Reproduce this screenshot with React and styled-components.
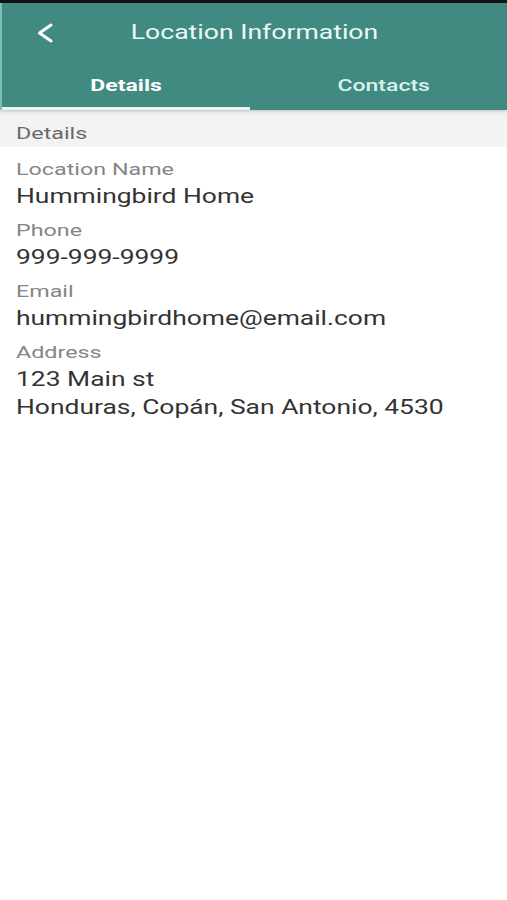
import React from "react";
import styled, { createGlobalStyle } from "styled-components";

const Global = createGlobalStyle`
  html, body { margin: 0; padding: 0; background: #ffffff; }
  body { font-family: Roboto, "Noto Sans", Arial, sans-serif; -webkit-font-smoothing: antialiased; }
  * { box-sizing: border-box; }
`;

/* The reference is rendered horizontally wide: every run of text is stretched by this factor */
const STRETCH = 1.37;

const Screen = styled.div`
  width: 507px;
  min-height: 900px;
  background: #fff;
  display: flex;
  flex-direction: column;
  overflow: hidden;
`;

const StatusStrip = styled.div`
  height: 3px;
  background: #121212;
`;

const Header = styled.header`
  background: #418a82;
  border-left: 2px solid #7fbdb3;
  display: flex;
  flex-direction: column;
  box-shadow: 0 2px 3px rgba(0, 0, 0, 0.22);
  position: relative;
  z-index: 1;
`;

const TitleRow = styled.div`
  height: 58px;
  display: flex;
  align-items: center;
  position: relative;
`;

const BackButton = styled.button`
  position: absolute;
  left: 35px;
  top: 20px;
  width: 16px;
  height: 20px;
  padding: 0;
  border: 0;
  background: transparent;
  display: block;
`;

const Title = styled.h1`
  margin: 0;
  flex: 1;
  text-align: center;
  color: #eef8f5;
  font-size: 19.4px;
  font-weight: 400;
  transform: scaleX(${STRETCH});
  transform-origin: 50% 50%;
`;

const Tabs = styled.nav`
  height: 49px;
  display: grid;
  grid-template-columns: 248px 1fr;
`;

const Tab = styled.div`
  display: flex;
  align-items: center;
  justify-content: center;
  padding-top: 2px;
  padding-left: ${(p) => (p.$active ? "0" : "10px")};
  border-bottom: 3px solid ${(p) => (p.$active ? "#e6f6f2" : "transparent")};
`;

const TabLabel = styled.span`
  display: inline-block;
  font-size: 16.8px;
  font-weight: ${(p) => (p.$active ? 700 : 500)};
  color: ${(p) => (p.$active ? "#ffffff" : "#d8f3ec")};
  transform: scaleX(${STRETCH});
`;

const SectionHeader = styled.div`
  margin-top: 3px;
  height: 34px;
  background: #f3f3f3;
  padding: 6px 0 0 16px;
  display: flex;
  align-items: center;
`;

const SectionTitle = styled.span`
  display: inline-block;
  color: #6a6a6a;
  font-size: 17px;
  transform: scaleX(${STRETCH});
  transform-origin: 0 50%;
`;

const Fields = styled.div`
  display: flex;
  flex-direction: column;
  padding: 10px 16px 0;
  gap: 7px;
`;

const Field = styled.div`
  display: flex;
  flex-direction: column;
`;

const Label = styled.div`
  color: #858585;
  font-size: 17px;
  line-height: 24px;
  padding-bottom: 2px;
  transform: scaleX(${STRETCH});
  transform-origin: 0 50%;
`;

const Value = styled.div`
  color: #333333;
  font-size: 19.3px;
  line-height: 28px;
  transform: scaleX(${STRETCH});
  transform-origin: 0 50%;
`;

const fields = [
  { label: "Location Name", lines: ["Hummingbird Home"] },
  { label: "Phone", lines: ["999-999-9999"] },
  { label: "Email", lines: ["hummingbirdhome@email.com"] },
  { label: "Address", lines: ["123 Main st", "Honduras, Copán, San Antonio, 4530"] },
];

export default function App() {
  return (
    <>
      <Global />
      <Screen>
        <StatusStrip />
        <Header>
          <TitleRow>
            <BackButton aria-label="Back">
              <svg width="16" height="20" viewBox="0 0 16 20">
                <path d="M14 2 L2.5 10 L14 18" fill="none" stroke="#ffffff" strokeWidth="3" strokeLinecap="round" strokeLinejoin="round" />
              </svg>
            </BackButton>
            <Title>Location Information</Title>
          </TitleRow>
          <Tabs>
            <Tab $active>
              <TabLabel $active>Details</TabLabel>
            </Tab>
            <Tab>
              <TabLabel>Contacts</TabLabel>
            </Tab>
          </Tabs>
        </Header>
        <SectionHeader>
          <SectionTitle>Details</SectionTitle>
        </SectionHeader>
        <Fields>
          {fields.map((f) => (
            <Field key={f.label}>
              <Label>{f.label}</Label>
              {f.lines.map((l) => (
                <Value key={l}>{l}</Value>
              ))}
            </Field>
          ))}
        </Fields>
      </Screen>
    </>
  );
}
